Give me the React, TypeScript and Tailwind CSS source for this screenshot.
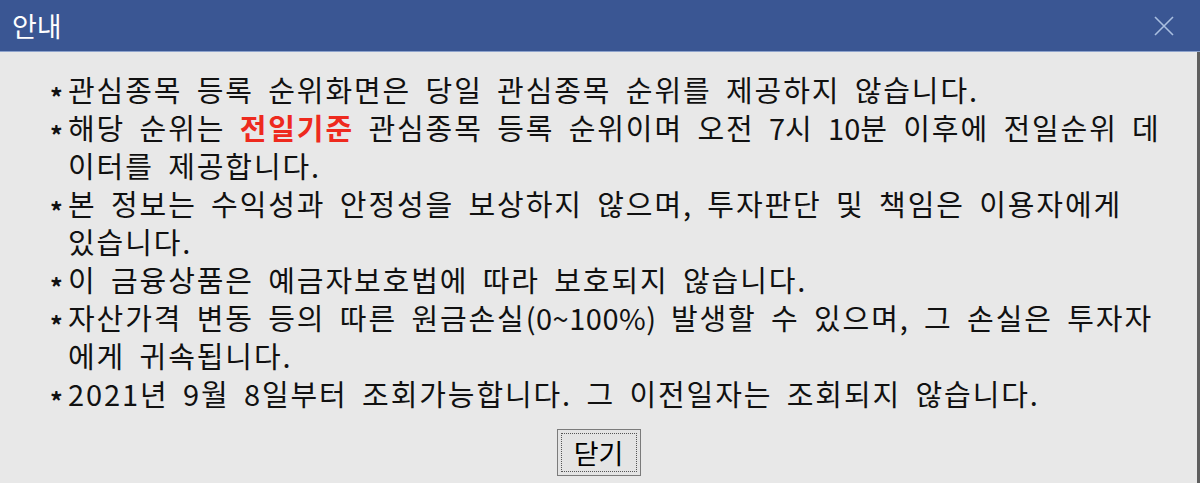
const items: { lines: React.ReactNode[] }[] = [
  { lines: ["관심종목 등록 순위화면은 당일 관심종목 순위를 제공하지 않습니다."] },
  {
    lines: [
      <>
        해당 순위는 <span className="font-bold text-[#ee2a1e]">전일기준</span> 관심종목 등록 순위이며 오전{" "}
        <span className="tracking-normal">7</span>시 <span className="tracking-normal">10</span>분 이후에 전일순위 데
      </>,
      "이터를 제공합니다.",
    ],
  },
  {
    lines: [
      "본 정보는 수익성과 안정성을 보상하지 않으며, 투자판단 및 책임은 이용자에게",
      "있습니다.",
    ],
  },
  { lines: ["이 금융상품은 예금자보호법에 따라 보호되지 않습니다."] },
  {
    lines: [
      <>
        자산가격 변동 등의 따른 원금손실<span className="tracking-[0.5px]">(0~100%)</span> 발생할 수 있으며, 그 손실은 투자자
      </>,
      "에게 귀속됩니다.",
    ],
  },
  { lines: ["2021년 9월 8일부터 조회가능합니다. 그 이전일자는 조회되지 않습니다."] },
];

export default function App() {
  return (
    <div
      className="w-[1200px] h-[483px] flex flex-col bg-[#e8e8e8] overflow-hidden"
      style={{ fontFamily: '"Noto Sans CJK KR", "Noto Sans", sans-serif' }}
    >
      {/* title bar */}
      <div className="h-[52px] shrink-0 bg-[#3a5693] border-b border-[#8ea3cc] flex items-center justify-between pl-[12px] pr-[26px]">
        <span className="text-white text-[27px] leading-none">안내</span>
        <svg width="20" height="20" viewBox="0 0 20 20" className="mt-[1px]">
          <path d="M1 1 L19 19 M19 1 L1 19" stroke="#a9bfe0" strokeWidth="1.6" fill="none" />
        </svg>
      </div>

      {/* body */}
      <div className="flex-1 flex flex-col border-r-[3px] border-[#5e5e5e] pt-[18px] pl-[50px]">
        <div className="flex flex-col text-[29px] leading-[38px] text-[#111] whitespace-nowrap tracking-[1.9px] [word-spacing:6px]">
          {items.map((item, i) => (
            <div key={i} className="flex">
              <span className="w-[18px] h-[38px] shrink-0 pt-[14px] text-[25px] leading-[24px] font-bold tracking-normal">*</span>
              <div className="flex flex-col">
                {item.lines.map((l, j) => (
                  <div key={j}>{l}</div>
                ))}
              </div>
            </div>
          ))}
        </div>

        <div className="flex justify-center mt-[17px] pr-[50px]">
          <button className="w-[84px] h-[47px] border border-[#7b7b7b] bg-[#e4e4e4] p-[3px] flex">
            <span className="flex-1 border border-dotted border-[#555] flex items-center justify-center text-[27px] leading-none text-black">
              닫기
            </span>
          </button>
        </div>
      </div>
    </div>
  );
}
